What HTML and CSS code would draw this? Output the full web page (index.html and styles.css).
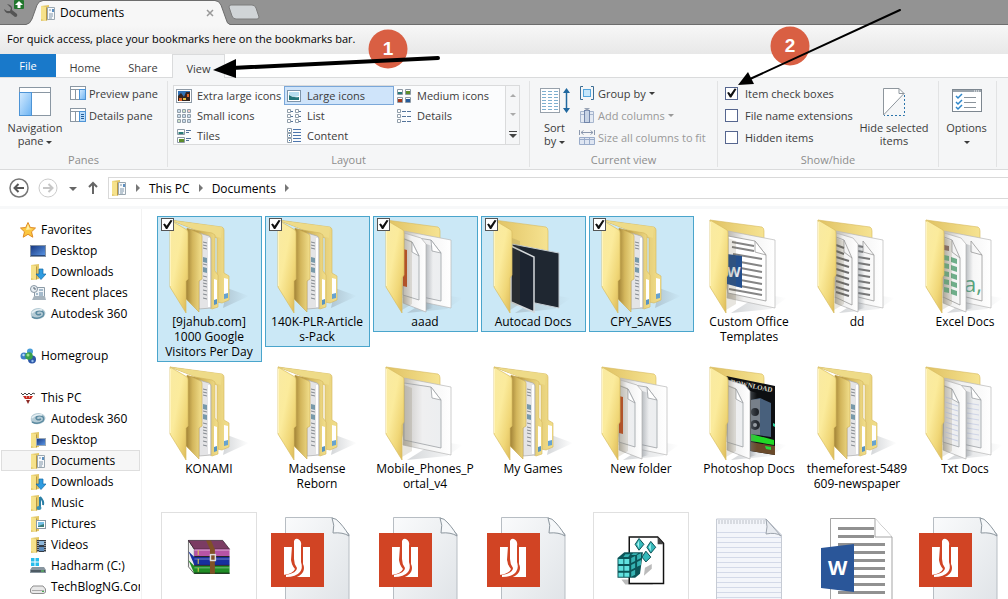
FILE: index.html
```html
<!DOCTYPE html>
<html lang="en">
<head>
  <meta charset="UTF-8" />
  <title>Documents</title>
  <link rel="stylesheet" href="styles.css">
</head>
<body>
  <!-- shared drawings -->
  <svg class="defs" aria-hidden="true">
    <defs>
      <linearGradient id="gFront" x1="0" y1="0" x2="1" y2="1">
        <stop offset="0" stop-color="#f9eaa2" /><stop offset=".4" stop-color="#fbeb9c" /><stop offset=".7" stop-color="#f0d778" /><stop offset="1" stop-color="#d9b453" />
      </linearGradient>
      <linearGradient id="gBack" x1="0" y1="0" x2="1" y2="0">
        <stop offset="0" stop-color="#e0c263" /><stop offset="1" stop-color="#f6e391" />
      </linearGradient>
      <linearGradient id="gSide" x1="0" y1="0" x2="1" y2="0">
        <stop offset="0" stop-color="#98792f" /><stop offset=".45" stop-color="#d3b65c" /><stop offset="1" stop-color="#f2df8c" />
      </linearGradient>
      <linearGradient id="gPage" x1="0" y1="0" x2="1" y2="0">
        <stop offset="0" stop-color="#b9b5ac" /><stop offset=".35" stop-color="#f0f0f0" /><stop offset="1" stop-color="#ffffff" />
      </linearGradient>
      <linearGradient id="gInner" x1="0" y1="0" x2="1" y2="0">
        <stop offset="0" stop-color="#c9c7c4" /><stop offset=".5" stop-color="#efeff0" /><stop offset="1" stop-color="#eceef0" />
      </linearGradient>
      <linearGradient id="gShadow" x1="0" y1="0" x2="1" y2="0">
        <stop offset="0" stop-color="#788088" stop-opacity=".45" /><stop offset="1" stop-color="#788088" stop-opacity="0" />
      </linearGradient>
      <linearGradient id="gDoc" x1="0" y1="0" x2="1" y2="1">
        <stop offset="0" stop-color="#fafbfc" /><stop offset="1" stop-color="#dfe3e7" />
      </linearGradient>
      <linearGradient id="gBlue" x1="0" y1="0" x2="1" y2="1">
        <stop offset="0" stop-color="#16357e" /><stop offset="1" stop-color="#5d9bea" />
      </linearGradient>
      <linearGradient id="gPane" x1="0" y1="0" x2="1" y2="1">
        <stop offset="0" stop-color="#d4ebff" /><stop offset="1" stop-color="#6bb3f3" />
      </linearGradient>
    </defs>

    <symbol id="back" viewBox="0 0 96 96">
      <path d="M60 76L86 80L70 91L30 95Z" fill="url(#gShadow)" opacity=".7" />
      <path d="M9 2L61 9Q63 10 63 13V80L27 76Z" fill="url(#gBack)" stroke="#d6b95c" stroke-width=".6" />
    </symbol>
    <symbol id="front" viewBox="0 0 96 96">
      <path d="M27 20L35 23V86L25 92Z" fill="#6b5b35" opacity=".16" />
      <path d="M9 2L26 12Q27 13 27 15V57L25 60V95L9 69Z" fill="url(#gFront)" stroke="#d9bd62" stroke-width=".7" />
      <path d="M9.500 4V68" stroke="#fff4bd" fill="none" />
    </symbol>
    <symbol id="page-back" viewBox="0 0 96 96">
      <path d="M27 13L74 22V90L26 80Z" fill="url(#gPage)" stroke="#b8b8b8" stroke-width=".7" />
    </symbol>
    <symbol id="page-front" viewBox="0 0 96 96">
      <path d="M49 26L56 28V90L49 92Z" fill="url(#gShadow)" />
      <path d="M27 15L44 20L49 26V94L26 85Z" fill="url(#gPage)" stroke="#b0b0b0" stroke-width=".7" />
    </symbol>
    <symbol id="inner-back" viewBox="0 0 96 96">
      <path d="M27 18L54 22L64 35V83L27 75Z" fill="url(#gInner)" stroke="#9da1a5" stroke-width=".8" />
      <path d="M54 22L55 33L64 35Z" fill="#fff" stroke="#9da1a5" stroke-width=".8" />
    </symbol>
    <symbol id="inner-front" viewBox="0 0 96 96">
      <path d="M27 21L35 24L42 38V82L26 77Z" fill="url(#gInner)" stroke="#9da1a5" stroke-width=".8" />
      <path d="M35 24V34L42 38Z" fill="#fff" stroke="#9da1a5" stroke-width=".8" />
    </symbol>
    <symbol id="folder-files" viewBox="0 0 96 96">
      <path d="M66 70L88 78L62 90Z" fill="url(#gShadow)" opacity=".7" />
      <path d="M9 2L61 9Q63 10 63 12V55L68 58V82L61 85L56 84V20Z" fill="url(#gSide)" stroke="#d3b65b" stroke-width=".6" />
      <path d="M9 2L61 9L60 20L40 14Z" fill="#eedb88" />
      <path d="M63 60L67 61V76L63 77Z" fill="#fff" /><path d="M63 76L67 75V80L63 81Z" fill="#67a3cf" />
      <path d="M28 11L51 15L54 17V53L57 57V89L51 91L46 88Z" fill="url(#gSide)" stroke="#d3b65b" stroke-width=".6" />
      <path d="M53 61L56 62V82L53 84Z" fill="#fff" /><path d="M53 82L56 81V86L53 87Z" fill="#5994c1" />
      <path d="M38 15L48 18Q50 19 50 21V90L38 91Z" fill="#e4e4e6" stroke="#aaa" stroke-width=".7" />
      <path d="M48 20V89" stroke="#fff" stroke-width="2" />
      <path d="M42 24l4 1M42 27l4 1M42 30l4 1M42 46l4 1M42 58l4 1M42 62l4 1M42 65l4 1M42 68l4 1M42 72l4 1M42 76l4 1M42 80l4 1" stroke="#858a90" stroke-width="1" />
      <path d="M42 39l4 1v5l-4 -1zM42 49l4 1v5l-4 -1z" fill="#7899aa" />
      <path d="M26 10L40 16L41 18V61L38 63V94L24 80Z" fill="url(#gSide)" stroke="#c9aa50" stroke-width=".6" />
      <path d="M9 2L26 12Q27 13 27 15V61L25 63V95L9 69Z" fill="url(#gFront)" stroke="#d9bd62" stroke-width=".7" />
      <path d="M9.500 4V68" stroke="#fff4bd" />
    </symbol>

    <symbol id="s-folder" viewBox="0 0 16 16">
      <path d="M1 1L9 0V15L1 16Z" fill="#e2c767" /><path d="M1 1L6 2V16L1 14Z" fill="#f6e28b" /><path d="M6 2L7 3V15L6 16Z" fill="#b99842" />
    </symbol>
    <symbol id="i-documents" viewBox="0 0 16 16">
      <use href="#s-folder" width="16" height="16" /><path d="M7.500 2.500H14.500V14.500H7.500Z" fill="#f7f9fb" stroke="#9aa7b0" />
      <path d="M9 5H11M9 9H13M9 11H13M9 13H12" stroke="#8097aa" /><path d="M12 4H14V7H12Z" fill="#5d8fc0" />
    </symbol>
    <symbol id="i-downloads" viewBox="0 0 16 16">
      <use href="#s-folder" width="16" height="16" /><path d="M9 5H13V10H16L11 15.500L6 10H9Z" fill="#2d9be0" stroke="#1669a5" stroke-width=".7" />
    </symbol>
    <symbol id="i-deskfolder" viewBox="0 0 16 16">
      <use href="#s-folder" width="16" height="16" /><rect x="6.500" y="6.500" width="9" height="7" fill="url(#gBlue)" stroke="#9ba8b4" />
    </symbol>
    <symbol id="i-music" viewBox="0 0 16 16">
      <use href="#s-folder" width="16" height="16" /><path d="M10 2Q14 6 13 10M10 2V13" stroke="#2b7fa6" stroke-width="2" fill="none" /><ellipse cx="9" cy="13" rx="2.500" ry="2" fill="#3790b5" />
    </symbol>
    <symbol id="i-pictures" viewBox="0 0 16 16">
      <use href="#s-folder" width="16" height="16" /><rect x="6.500" y="4.500" width="9" height="8" fill="#fff" stroke="#8a98a3" /><path d="M8 6H14V9L8 10Z" fill="#76bfe6" /><path d="M8 10L14 8V11H8Z" fill="#397d78" />
    </symbol>
    <symbol id="i-videos" viewBox="0 0 16 16">
      <use href="#s-folder" width="16" height="16" /><rect x="7" y="3" width="9" height="12" fill="#333c46" /><rect x="9" y="4" width="5" height="4" fill="#8cb6da" /><rect x="9" y="10" width="5" height="4" fill="#5d8cbc" />
      <path d="M8 4V15M15 4V15" stroke="#fff" stroke-dasharray="1 1" />
    </symbol>
    <symbol id="i-desktop" viewBox="0 0 16 16">
      <rect x=".5" y="2.500" width="15" height="11" fill="url(#gBlue)" stroke="#8593a3" /><path d="M1 12.500H15" stroke="#28497f" />
    </symbol>
    <symbol id="i-recent" viewBox="0 0 16 16">
      <path d="M4.500 2.500H14.500V12.500H4.500Z" fill="#f0f4f7" stroke="#8c9ba7" /><path d="M2 15L4 11H15L16 15Z" fill="#a6b3bd" /><circle cx="4" cy="4" r="3.500" fill="#e9eef2" stroke="#8897a3" /><path d="M4 2V4H6" stroke="#566774" fill="none" />
      <path d="M9 5H13M6 9H8M9 8H13M9 10H13" stroke="#5a81a0" />
    </symbol>
    <symbol id="i-autodesk" viewBox="0 0 16 16">
      <path d="M1 6Q3 2 9 2Q15 3 15.500 7Q15 12 9 13Q5 14 3 12Q0 11 1 6Z" fill="#b5cbd5" />
      <path d="M2 11Q8 14 13 10Q15 6 11 5Q7 4 6 7Q7 10 11 8" fill="none" stroke="#5b8aa0" stroke-width="1.500" /><path d="M2 7Q5 3 12 4" stroke="#e6eff3" fill="none" stroke-width="1.500" />
    </symbol>

    <symbol id="i-doc-orange" viewBox="0 0 96 96">
      <path d="M16.500 5.500H63L80 22V96H16.500Z" fill="url(#gDoc)" stroke="#b7bdc3" />
      <path d="M63 6Q66 13 64 21Q74 20 80 24Q78 19 71 11Q67 6 63 6Z" fill="#f6f8fa" stroke="#8d979f" />
      <rect x="2" y="21" width="53" height="54" fill="#d14424" />
      <path d="M15 35H41V65H15Z" fill="#fff" />
      <path d="M23 34H34V52Q36 56 34 60Q31 65 24 66H14V63Q24 62 26 57Q22 52 22 48Z" fill="#d14424" />
      <path d="M25 47V29Q26 26 29 27Q33 29 32 34V50Q34 56 31 60Q27 65 17 65V63Q28 61 28 56Q25 52 25 47Z" fill="#fff" />
      <path d="M15 35H22V48Q22 53 24 56Q23 60 15 62Z" fill="#fff" />
    </symbol>
  </svg>

  <header class="tab-strip">
    <svg class="wrench" width="28" height="24" viewBox="0 0 28 24"><path d="M7 4L11 8L10 11L7 11L4 9Q5 14 10 13L15 17Q18 17 17 14L12 10Q13 5 7 4Z" fill="#555" /><rect x="14" y="0" width="10" height="9" rx="1" fill="#21762d" /><path d="M19 1L23 5H20.500V8H17.500V5H15Z" fill="#fff" /></svg>
    <div class="tab">
      <svg class="tab-shape" width="204" height="25" viewBox="0 0 204 25"><path d="M0 24.500Q4 24 6 19L11 5Q13 1 17 1H189Q193 1 195 5L200 19Q201 24 204 24.500V25H0Z" fill="#f7f7f7" /><path d="M0 24.500Q4 24 6 19L11 5Q13 .5 17 .5H189Q193 .5 195 5L200 19Q201 24 204 24.500" fill="none" stroke="#6d6d6d" /></svg>
      <svg width="16" height="16"><use href="#i-documents" /></svg>
      <span>Documents</span>
      <button class="tab-close" aria-label="Close tab"><svg width="8" height="8" viewBox="0 0 8 8"><path d="M1 1L7 7M7 1L1 7" stroke="#999" stroke-width="1.500" /></svg></button>
    </div>
    <button class="new-tab" aria-label="New tab"><svg width="32" height="16" viewBox="0 0 32 16"><path d="M3 1H24Q27 1 28 4L31 13Q31 15 29 15H8Q5 15 4 12L1 3Q1 1 3 1Z" fill="#d0d4d7" stroke="#7c7c7c" /></svg></button>
  </header>
  <div class="bookmarks">For quick access, place your bookmarks here on the bookmarks bar.</div>

  <nav class="ribbon-tabs">
    <button class="file">File</button>
    <button>Home</button>
    <button>Share</button>
    <button class="active">View</button>
  </nav>

  <section class="ribbon">
    <div class="group panes">
      <div class="group-body">
        <button class="big">
          <svg width="32" height="30" viewBox="0 0 32 30"><rect x=".5" y=".5" width="31" height="28" fill="#fff" stroke="#8a97a3" /><path d="M1 5.500H31" stroke="#8a97a3" /><rect x=".5" y="5.500" width="12" height="23" fill="url(#gPane)" stroke="#4d94d6" /></svg>
          <span>Navigation<br>pane <i class="caret"></i></span>
        </button>
        <div class="stack">
          <button><svg width="16" height="16" viewBox="0 0 16 16"><rect x=".5" y="1.500" width="15" height="13" fill="#fff" stroke="#8a97a3" /><path d="M1 4.500H15M5.500 5V14" stroke="#8a97a3" /><rect x="9.500" y="4.500" width="6" height="10" fill="url(#gPane)" stroke="#4d94d6" /></svg>Preview pane</button>
          <button><svg width="16" height="16" viewBox="0 0 16 16"><rect x=".5" y="1.500" width="15" height="13" fill="#fff" stroke="#8a97a3" /><path d="M1 4.500H15M5.500 5V14" stroke="#8a97a3" /><rect x="9.500" y="4.500" width="6" height="10" fill="#b9dcfa" stroke="#4d94d6" /><path d="M11 7.500H14M11 9.500H14M11 11.500H14" stroke="#235d9a" /></svg>Details pane</button>
        </div>
      </div>
      <div class="group-title">Panes</div>
    </div>

    <div class="group layout">
      <div class="group-body">
        <div class="gallery">
          <button><svg width="16" height="16" viewBox="0 0 16 16"><rect x=".5" y="1.500" width="15" height="13" fill="#fff" stroke="#8d99a5" /><rect x="2" y="3" width="12" height="10" fill="#3272b5" /><path d="M2 13V8L5 5L8 9L10 4H14V13Z" fill="#35251e" /><path d="M3 10h3v3h-3zM11 6h2v3h-2z" fill="#e1662b" /><path d="M7 10h3v2h-3z" fill="#e9c343" /></svg>Extra large icons</button>
          <button class="selected"><svg width="16" height="16" viewBox="0 0 16 16"><rect x="1.500" y="2.500" width="13" height="11" fill="#fff" stroke="#7d94aa" /><path d="M3 4H13V8L8 9L3 7Z" fill="#b7ddee" /><path d="M3 7Q7 10 13 9V12H3Z" fill="#247579" /></svg>Large icons</button>
          <button><svg width="16" height="16" viewBox="0 0 16 16"><path d="M1.500 1.500h5v5h-5zM9.500 1.500h5v5h-5zM1.500 9.500h5v5h-5zM9.500 9.500h5v5h-5z" fill="#fff" stroke="#8d99a5" /><path d="M2 4h4v2h-4z" fill="#297a77" /><path d="M10 3h4v3h-4z" fill="#5c8e2b" /><path d="M2 11h4v3h-4z" fill="#a3391d" /><path d="M10 11h4v3h-4z" fill="#245b9c" /></svg>Medium icons</button>
          <button><svg width="16" height="16" viewBox="0 0 16 16"><path d="M1.500 1.500h3v3h-3zM6.500 1.500h3v3h-3zM11.500 1.500h3v3h-3zM1.500 6.500h3v3h-3zM6.500 6.500h3v3h-3zM11.500 6.500h3v3h-3zM1.500 11.500h3v3h-3zM6.500 11.500h3v3h-3zM11.500 11.500h3v3h-3z" fill="#fff" stroke="#919eaa" /><path d="M3 2.500v1M3 7.500v1M8 7.500v1M13 7.500v1M8 12.500v1M13 12.500v1" stroke="#2f72a8" /><path d="M8 2.500v1M3 12.500v1" stroke="#42912c" /><path d="M13 2.500v1" stroke="#c23a22" /></svg>Small icons</button>
          <button><svg width="16" height="16" viewBox="0 0 16 16"><path d="M1.500 1.500h3v3h-3zM1.500 6.500h3v3h-3zM1.500 11.500h3v3h-3zM9.500 1.500h3v3h-3zM9.500 6.500h3v3h-3zM9.500 11.500h3v3h-3z" fill="#fff" stroke="#919eaa" /><path d="M5 3.500h2M5 8.500h2M5 13.500h2M13 3.500h2M13 8.500h2M13 13.500h2" stroke="#54749a" /></svg>List</button>
          <button><svg width="16" height="16" viewBox="0 0 16 16"><path d="M1.500 1.500h3v3h-3zM1.500 6.500h3v3h-3zM1.500 11.500h3v3h-3z" fill="#fff" stroke="#919eaa" /><path d="M6 3.500h4M11 3.500h4M6 8.500h4M11 8.500h4M6 13.500h4M11 13.500h4" stroke="#54749a" /></svg>Details</button>
          <button><svg width="16" height="16" viewBox="0 0 16 16"><path d="M1.500 1.500h7v5h-7zM1.500 9.500h7v5h-7z" fill="#fff" stroke="#8d99a5" /><path d="M2.500 4h5v2h-5z" fill="#297a77" /><path d="M3 11h5v3h-5z" fill="#5c8e2b" /><path d="M10 2.500h5M10 4.500h3M10 10.500h5M10 12.500h3" stroke="#54749a" /></svg>Tiles</button>
          <button><svg width="16" height="16" viewBox="0 0 16 16"><path d="M1.500 .5h4v4h-4zM1.500 5.500h4v4h-4zM1.500 10.500h4v4h-4z" fill="#fff" stroke="#919eaa" /><path d="M3 2.500h1M3 7.500h1M3 12.500h1" stroke="#2f72a8" /><path d="M7 1.500h8M7 4.500h8M7 7.500h8M7 10.500h8M7 13.500h8" stroke="#4d76ad" /></svg>Content</button>
        </div>
        <div class="gallery-scroll">
          <button aria-label="Scroll up"><i class="caret up"></i></button>
          <button aria-label="Scroll down"><i class="caret"></i></button>
          <button class="more" aria-label="More layouts"><svg width="8" height="8" viewBox="0 0 8 8"><path d="M0 1.500H8" stroke="#444" /><path d="M0 4H8L4 8Z" fill="#444" /></svg></button>
        </div>
      </div>
      <div class="group-title">Layout</div>
    </div>

    <div class="group current">
      <div class="group-body">
        <button class="big">
          <svg width="32" height="30" viewBox="0 0 32 30"><rect x="1.500" y="1.500" width="19" height="24" fill="#fff" stroke="#97a1ab" /><path d="M3 4.500H20M3 7.500H20M3 10.500H20M3 13.500H20M3 16.500H20M3 19.500H20M3 22.500H20" stroke="#7fb0cf" stroke-dasharray="4 2" /><path d="M27.500 3V24" stroke="#20689f" stroke-width="1.500" /><path d="M24 6L27.500 1L31 6ZM24 21L27.500 26L31 21Z" fill="#20689f" /></svg>
          <span>Sort<br>by <i class="caret"></i></span>
        </button>
        <div class="stack">
          <button><svg width="16" height="16" viewBox="0 0 16 16"><path d="M4 1.500H1.500V14.500H4M12 1.500H14.500V14.500H12" fill="none" stroke="#3c6d94" /><rect x="4.500" y="4.500" width="7" height="7" fill="#c5e6fb" stroke="#54a5dc" /></svg>Group by <i class="caret"></i></button>
          <button disabled><svg width="16" height="16" viewBox="0 0 16 16"><path d="M1.500 4.500H14.500V15.500H1.500ZM1 7.500H15" fill="#e4eaf3" stroke="#a7b6ce" /><rect x="5.500" y="3.500" width="5" height="12" fill="#c7d3e5" stroke="#7387ab" /><path d="M5 1H11L8 4Z" fill="#9aa4b5" /></svg>Add columns <i class="caret"></i></button>
          <button disabled><svg width="16" height="16" viewBox="0 0 16 16"><path d="M.5 1V6M15.500 1V6M2 3.500H14M4.500 1.500L2 3.500L4.500 5.500M11.500 1.500L14 3.500L11.500 5.500" fill="none" stroke="#8b98ae" /><path d="M.5 8.500H15.500V15.500H.5ZM.5 10.500H15.500M5.500 8.500V15.500M10.500 8.500V15.500" fill="#dfe6f2" stroke="#9aacca" /></svg>Size all columns to fit</button>
        </div>
      </div>
      <div class="group-title">Current view</div>
    </div>

    <div class="group showhide">
      <div class="group-body">
        <div class="stack">
          <label><input type="checkbox" checked>Item check boxes</label>
          <label><input type="checkbox">File name extensions</label>
          <label><input type="checkbox">Hidden items</label>
        </div>
        <button class="big">
          <svg width="24" height="30" viewBox="0 0 24 30"><path d="M1 1.500H17L22 6.500L1 28.500Z" fill="#fff" /><path d="M1.500 28V1.500H17L22.500 7M17 1.500V6.500H22L1.500 28" fill="none" stroke="#8e969d" /><path d="M22.500 8V28.500H2" fill="none" stroke="#2a74aa" stroke-dasharray="2 2" /></svg>
          <span>Hide selected<br>items</span>
        </button>
      </div>
      <div class="group-title">Show/hide</div>
    </div>

    <div class="group options">
      <div class="group-body">
        <button class="big">
          <svg width="32" height="30" viewBox="0 0 32 30"><rect x="1.500" y="2.500" width="29" height="22" fill="#fff" stroke="#7d8790" /><path d="M2 4H30" stroke="#9ba4ac" stroke-width="2" /><path d="M23 4H29" stroke="#fff" stroke-dasharray="1 1" /><path d="M5 9L7 11L11 7M5 15L7 17L11 13M5 20L7 22L11 18" fill="none" stroke="#2e86c9" stroke-width="1.500" /><path d="M13 10.500H25M13 15.500H25M13 20.500H25" stroke="#8a939b" /></svg>
          <span>Options<br><i class="caret"></i></span>
        </button>
      </div>
    </div>
  </section>

  <nav class="address-row">
    <button aria-label="Back"><svg width="20" height="20" viewBox="0 0 20 20"><circle cx="10" cy="10" r="9" fill="#fff" stroke="#777" stroke-width="1.500" /><path d="M15 10H6M9.500 6L5.500 10L9.500 14" fill="none" stroke="#555" stroke-width="2" /></svg></button>
    <button aria-label="Forward"><svg width="20" height="20" viewBox="0 0 20 20"><circle cx="10" cy="10" r="9" fill="#fff" stroke="#ccc" stroke-width="1" /><path d="M5 10H14M10.500 6L14.500 10L10.500 14" fill="none" stroke="#c6c6c6" stroke-width="2" /></svg></button>
    <button class="recent" aria-label="Recent locations"><i class="caret"></i></button>
    <button aria-label="Up"><svg width="12" height="14" viewBox="0 0 12 14"><path d="M6 13V2M2 6L6 2L10 6" fill="none" stroke="#666" stroke-width="2" /></svg></button>
    <div class="address">
      <svg width="16" height="16"><use href="#i-documents" /></svg>
      <i class="chev"></i><a href="#">This PC</a><i class="chev"></i><a href="#">Documents</a><i class="chev"></i>
    </div>
  </nav>

  <div class="content">
    <aside class="sidebar">
      <a href="#" class="root"><svg width="16" height="16" viewBox="0 0 16 16"><path d="M8 .5L10.300 5.500L15.500 6L11.500 9.800L12.800 15.200L8 12.300L3.200 15.200L4.500 9.800L.5 6L5.700 5.500Z" fill="#fbc740" stroke="#df8a25" /><path d="M8 2L9.500 6.500L13 7L6 8Z" fill="#fff0a6" /></svg>Favorites</a>
      <a href="#"><svg width="16" height="16"><use href="#i-desktop" /></svg>Desktop</a>
      <a href="#"><svg width="16" height="16"><use href="#i-downloads" /></svg>Downloads</a>
      <a href="#"><svg width="16" height="16"><use href="#i-recent" /></svg>Recent places</a>
      <a href="#"><svg width="16" height="16"><use href="#i-autodesk" /></svg>Autodesk 360</a>
      <a href="#" class="root spaced"><svg width="16" height="16" viewBox="0 0 16 16"><circle cx="4" cy="8" r="3.500" fill="#3d7ec7" /><circle cx="10" cy="3.500" r="3" fill="#4a9ed9" /><circle cx="12" cy="11.500" r="4" fill="#2c57a8" /><circle cx="9" cy="8" r="3.800" fill="#3aa14a" /><circle cx="8" cy="7" r="1.500" fill="#9be08e" /><circle cx="3.500" cy="7" r="1.200" fill="#b8dcf7" /><circle cx="12.500" cy="13" r="1.200" fill="#98c1ee" /></svg>Homegroup</a>
      <a href="#" class="root spaced"><svg width="16" height="16" viewBox="0 0 16 16"><path d="M1 3L3 5L5 3L7 5L9 3L11 5L13 3L15 4" fill="none" stroke="#444" /><path d="M3 6H13L11 9H5Z" fill="#c82c22" /><path d="M6 10H10L8 14Z" fill="#8d2a24" /><path d="M6 7H7M9 7H10" stroke="#fff" /></svg>This PC</a>
      <a href="#"><svg width="16" height="16"><use href="#i-autodesk" /></svg>Autodesk 360</a>
      <a href="#"><svg width="16" height="16"><use href="#i-deskfolder" /></svg>Desktop</a>
      <a href="#" class="current-item"><svg width="16" height="16"><use href="#i-documents" /></svg>Documents</a>
      <a href="#"><svg width="16" height="16"><use href="#i-downloads" /></svg>Downloads</a>
      <a href="#"><svg width="16" height="16"><use href="#i-music" /></svg>Music</a>
      <a href="#"><svg width="16" height="16"><use href="#i-pictures" /></svg>Pictures</a>
      <a href="#"><svg width="16" height="16"><use href="#i-videos" /></svg>Videos</a>
      <a href="#"><svg width="16" height="16" viewBox="0 0 16 16"><path d="M1 0h3.500v3.500h-3.500zM5.500 0h3.500v3.500h-3.500zM1 4.500h3.500v3.500h-3.500zM5.500 4.500h3.500v3.500h-3.500z" fill="#28bdec" /><path d="M2 9H14L16 12V15H0V12Z" fill="#8996a0" /><path d="M1 12H15V14H1Z" fill="#4d5a63" /><path d="M11 13h3" stroke="#62df67" /></svg>Hadharm (C:)</a>
      <a href="#"><svg width="16" height="16" viewBox="0 0 16 16"><path d="M3 7H13L15.500 10V13Q15 14.500 13 14.500H3Q1 14.500 .5 13V10Z" fill="#e8e8e8" stroke="#8e8e8e" /><path d="M2 11.500H14" stroke="#aaa" /><path d="M12 12.500h2" stroke="#4cad50" /></svg>TechBlogNG.Com</a>
    </aside>

    <main class="files">
      <label class="tile picked"><input type="checkbox" checked><svg width="96" height="96"><use href="#folder-files" /></svg><span>[9jahub.com]<br>1000 Google<br>Visitors Per Day</span></label>
      <label class="tile picked"><input type="checkbox" checked><svg width="96" height="96"><use href="#folder-files" /></svg><span>140K-PLR-Article<br>s-Pack</span></label>
      <label class="tile picked"><input type="checkbox" checked><svg width="96" height="96"><use href="#back" /><use href="#page-back" /><use href="#inner-back" /><use href="#page-front" /><use href="#inner-front" /><path d="M26 31L30 32V69L26 68Z" fill="#bf5127" /><use href="#front" /></svg><span>aaad</span></label>
      <label class="tile picked"><input type="checkbox" checked><svg width="96" height="96" viewBox="0 0 96 96"><use href="#back" /><path d="M27 26L74 35V90L26 80Z" fill="#1f2731" stroke="#c4ccd2" /><path d="M26 28L49 39V94L26 84Z" fill="#1c2430" stroke="#d5d9dc" stroke-width="1.500" /><use href="#front" /></svg><span>Autocad Docs</span></label>
      <label class="tile picked"><input type="checkbox" checked><svg width="96" height="96"><use href="#folder-files" /></svg><span>CPY_SAVES</span></label>
      <div class="tile"><svg width="96" height="96" viewBox="0 0 96 96"><use href="#back" /><use href="#page-back" /><path d="M27 18L54 23L65 37V83L27 75Z" fill="#fff" stroke="#999" stroke-width=".8" /><path d="M54 23V34L65 37Z" fill="#fff" stroke="#999" stroke-width=".8" /><path d="M31 24l22 4M31 29l22 4M32 36l29 5M34 43l27 5M34 49l27 5M34 55l27 5M34 61l27 5M34 67l27 5M28 71l33 6" stroke="#858585" stroke-width="2" /><path d="M26 36L41 38V70L26 66Z" fill="#24508f" /><text x="26" y="59" class="w-small">W</text><use href="#front" /></svg><span>Custom Office<br>Templates</span></div>
      <div class="tile"><svg width="96" height="96" viewBox="0 0 96 96"><use href="#back" /><use href="#page-back" /><path d="M54 23L65 37V83L49 79M54 23V34L65 37" fill="none" stroke="#999" stroke-width=".8" /><path d="M49 28l5 1M49 33l5 1M49 39l12 2M49 45l12 2M49 51l12 2M49 57l12 2M49 63l12 2M49 69l12 2M49 75l12 2" stroke="#777" stroke-width="2" /><use href="#page-front" /><path d="M27 19L35 22L43 40V87L26 79M35 22V34L43 40" fill="none" stroke="#999" stroke-width=".8" /><path d="M27 27l8 3M27 33l8 3M27 39l13 4M27 45l13 4M27 51l13 4M27 57l13 4M27 63l13 4M27 69l13 4M27 74l13 4" stroke="#6d6d6d" stroke-width="2" /><use href="#front" /></svg><span>dd</span></div>
      <div class="tile"><svg width="96" height="96" viewBox="0 0 96 96"><use href="#back" /><use href="#page-back" /><path d="M54 23L65 37V83L49 79M54 23V34L65 37" fill="none" stroke="#999" stroke-width=".8" /><text x="47" y="74" class="a-green">a,</text><use href="#page-front" /><path d="M27 19L35 22L43 40V87L26 79M35 22V34L43 40" fill="none" stroke="#999" stroke-width=".8" /><path d="M27 27l5 1v5l-5 -1z" fill="#8a716b" /><path d="M27 37l5 1v5l-5 -1zM34 39l6 2v5l-6 -2zM27 45l5 1v5l-5 -1zM34 47l6 2v5l-6 -2zM27 53l5 1v5l-5 -1zM34 55l6 2v5l-6 -2zM27 61l5 1v5l-5 -1zM34 63l6 2v5l-6 -2zM27 69l5 1v5l-5 -1zM34 71l6 2v5l-6 -2z" fill="#6fae8a" /><use href="#front" /></svg><span>Excel Docs</span></div>

      <div class="tile"><svg width="96" height="96"><use href="#folder-files" /></svg><span>KONAMI</span></div>
      <div class="tile"><svg width="96" height="96"><use href="#folder-files" /></svg><span>Madsense<br>Reborn</span></div>
      <div class="tile"><svg width="96" height="96"><use href="#back" /><use href="#page-back" /><use href="#inner-back" /><use href="#front" /></svg><span>Mobile_Phones_P<br>ortal_v4</span></div>
      <div class="tile"><svg width="96" height="96"><use href="#folder-files" /></svg><span>My Games</span></div>
      <div class="tile"><svg width="96" height="96"><use href="#back" /><use href="#page-back" /><use href="#inner-back" /><use href="#page-front" /><use href="#inner-front" /><path d="M26 31L30 32V69L26 68Z" fill="#bf5127" /><use href="#front" /></svg><span>New folder</span></div>
      <div class="tile"><svg width="96" height="96" viewBox="0 0 96 96"><use href="#back" /><path d="M25 11L74 21V90L49 86Z" fill="#0d0f12" /><text x="29" y="19" class="poster" transform="rotate(11 29 19)">DOWNLOAD</text><path d="M50 35L59 33L70 38V72L50 69Z" fill="#48607c" /><path d="M50 35L59 34V70L50 69Z" fill="#78808a" /><circle cx="54" cy="47" r="4" fill="#20242a" /><circle cx="54" cy="60" r="5" fill="#252a31" /><circle cx="54" cy="60" r="2" fill="#9aa0a6" /><path d="M50 69L73 75V80L50 76Z" fill="#21d827" /><path d="M50 77L74 81V90L50 86Z" fill="#6a4a2a" /><path d="M64 81l6 1v3l-5 -1z" fill="#24dc39" /><path d="M72 58l2 1v3l-2 -1z" fill="#2cd0a0" /><use href="#page-front" /><use href="#inner-front" /><use href="#front" /></svg><span>Photoshop Docs</span></div>
      <div class="tile"><svg width="96" height="96"><use href="#folder-files" /></svg><span>themeforest-5489<br>609-newspaper</span></div>
      <div class="tile"><svg width="96" height="96" viewBox="0 0 96 96"><use href="#back" /><use href="#page-back" /><use href="#inner-back" /><path d="M50 38l12 2M50 43l12 2M50 48l12 2M50 53l12 2M50 58l12 2M50 63l12 2M50 68l12 2M50 73l12 2" stroke="#cfd5e8" /><use href="#page-front" /><use href="#inner-front" /><path d="M28 32l7 2M28 37l13 4M28 42l13 4M28 47l13 4M28 52l13 4M28 57l13 4M28 62l13 4M28 67l13 4M28 72l13 4" stroke="#c8cfe5" /><use href="#front" /></svg><span>Txt Docs</span></div>

      <div class="tile"><svg class="framed" width="96" height="96" viewBox="0 0 96 96">
        <path d="M27 28L33 37V62L27 55Z" fill="#eee" stroke="#333" stroke-width=".7" />
        <path d="M27 28H62L69 37H33Z" fill="#7b3c63" stroke="#2b1425" stroke-width=".7" /><path d="M33 37H69V44H33Z" fill="#b654a5" /><path d="M27 39L33 45H69V53H33Z" fill="#172f9e" /><path d="M27 48L33 54H69V62H33Z" fill="#1f8c25" />
        <path d="M33 38H69M33 47H69M33 56H69" stroke="#fff" opacity=".4" /><path d="M33 44.500H69M33 53.500H69M33 61.500H69" stroke="#111" /><path d="M37 38V43M37 47V52M37 56V60" stroke="#e7ce4c" />
        <path d="M45 28H50L54 37V62H49V37Z" fill="#805126" /><rect x="49.500" y="42.500" width="5" height="6" fill="none" stroke="#ddd" stroke-width="1.500" />
      </svg></div>
      <div class="tile"><svg width="96" height="96"><use href="#i-doc-orange" /></svg></div>
      <div class="tile"><svg width="96" height="96"><use href="#i-doc-orange" /></svg></div>
      <div class="tile"><svg width="96" height="96"><use href="#i-doc-orange" /></svg></div>
      <div class="tile"><svg class="framed" width="96" height="96" viewBox="0 0 96 96">
        <path d="M28 68H60V73H32Z" fill="#bbb" /><path d="M36 24.500H65L71 31V72H36Z" fill="#fff" stroke="#111" stroke-width="1.500" /><path d="M65 24V32H71Z" fill="#444" />
        <path d="M52 56l7 -4v5l-8 7z" fill="#bbb" /><path d="M24 46L31 40H50L47 62L42 66H24Z" fill="#0c5558" />
        <path d="M25 47h5v5h-5zM31 47h5v5h-5zM25 54h5v5h-5zM31 54h5v5h-5zM25 61h5v4h-5zM31 61h5v4h-5z" fill="#61e2df" /><path d="M38 46l4 -2v5l-4 2zM44 43l4 -2v5l-4 2zM38 53l4 -2v5l-4 2zM44 50l4 -2v5l-4 2zM38 60l4 -2v5l-4 2zM32 42h5l-2 3h-5zM40 41h5l-2 2h-5z" fill="#36b3b3" />
        <path d="M46 26L51 32L46 38L42 32ZM58 29L63 35L58 41L54 35ZM53 39L58 45L53 50L49 45Z" fill="#36b9bb" stroke="#0b4d50" /><path d="M46 28V36L44 32ZM58 31V39L56 35Z" fill="#a8f2ef" />
      </svg></div>
      <div class="tile"><svg width="96" height="96" viewBox="0 0 96 96"><path d="M15.500 7H65L80.500 23V96H15.500Z" fill="#f3f5fa" stroke="#c6cbd4" /><path d="M16 20.500H72M16 25.500H80M16 30.500H80M16 35.500H80M16 40.500H80M16 45.500H80M16 50.500H80M16 55.500H80M16 60.500H80M16 65.500H80M16 70.500H80M16 75.500H80M16 80.500H80M16 85.500H80" stroke="#d3d9e8" /><path d="M18 8V12M21 8V12M24 8V12M27 8V12M30 8V12M33 8V12M36 8V12M39 8V12M42 8V12M45 8V12M48 8V12M51 8V12M54 8V12M57 8V12M60 8V12M63 8V12" stroke="#bdc1c8" /><path d="M65 7Q67 15 65 22Q75 20 80 24Z" fill="#e8ebf0" stroke="#9ca3ac" /></svg></div>
      <div class="tile"><svg width="96" height="96" viewBox="0 0 96 96"><path d="M21.500 6.500H66L83 25V96H21.500Z" fill="#fff" stroke="#a5a5a5" /><path d="M29 16.500H65M29 24.500H65M29 32.500H76M29 40.500H76M29 48.500H76M29 56.500H76M29 64.500H76M29 72.500H76M29 80.500H76" stroke="#919191" stroke-width="3" /><path d="M66 6.500V25H83" fill="#fff" stroke="#a5a5a5" /><path d="M12 36L45 32V80L12 76Z" fill="#2a5699" /><text x="19" y="63" class="w-big">W</text></svg></div>
      <div class="tile"><svg width="96" height="96"><use href="#i-doc-orange" /></svg></div>
    </main>
  </div>

  <!-- step markers over the window -->
  <svg class="callouts" width="1008" height="100" viewBox="0 0 1008 100">
    <circle cx="388" cy="49" r="19.500" fill="#d95f43" /><text x="388" y="55">1</text>
    <circle cx="790" cy="46" r="19.500" fill="#d95f43" /><text x="790" y="52">2</text>
    <path d="M438 58L232 68" stroke="#000" stroke-width="4" stroke-linecap="round" /><path d="M213 70L236 59V78Z" />
    <path d="M900 10L750 79" stroke="#000" stroke-width="2" stroke-linecap="round" /><path d="M738 85L748 72L754 84Z" />
  </svg>
</body>
</html>
```
FILE: styles.css
```css
:root {
  --ribbon: #f5f6f7;
  --line: #dadbdc;
  --text: #3b3b3b;
  --muted: #8d8d8d;
  --blue: #1979ca;
}

* {
  box-sizing: border-box;
}

body {
  margin: 0;
  height: 100vh;
  overflow: hidden;
  display: flex;
  flex-direction: column;
  position: relative;
  background: #fff;
  color: #000;
  font-family: "Open Sans", "Noto Sans", sans-serif;
  font-size: 12px;
  line-height: 15px;
}

button {
  font: inherit;
  color: inherit;
  background: none;
  border: none;
  padding: 0;
}

a {
  color: inherit;
  text-decoration: none;
}

svg {
  flex: none;
  display: block;
}

.defs {
  position: absolute;
  width: 0;
  height: 0;
}

/* browser tab strip */
.tab-strip {
  flex: none;
  display: flex;
  height: 25px;
  background: #939393;
  border-bottom: 1px solid #6d6d6d;
}

.wrench {
  margin-right: -2px;
}

.tab {
  position: relative;
  display: flex;
  align-items: center;
  width: 204px;
  height: 25px;
  padding: 0 16px 0 14px;
  gap: 4px;
}

.tab-shape {
  position: absolute;
  left: 0;
  top: 0;
}

.tab > :not(.tab-shape) {
  position: relative;
}

.tab-close {
  margin-left: auto;
}

.new-tab {
  align-self: center;
  margin-left: -2px;
}

.bookmarks {
  flex: none;
  height: 29px;
  padding: 6px 7px;
  font-size: 11px;
  background: linear-gradient(#f7f7f7, #e8e8e8);
}

/* ribbon */
.ribbon-tabs {
  flex: none;
  display: flex;
  height: 24px;
  font-size: 11px;
  color: var(--text);
  border-bottom: 1px solid var(--line);
}

.ribbon-tabs button {
  width: 58px;
  height: 23px;
  padding-top: 3px;
}

.ribbon-tabs .file {
  width: 56px;
  background: var(--blue);
  color: #fff;
  padding: 0;
}

.ribbon-tabs .active {
  width: 53px;
  height: 24px;
  background: var(--ribbon);
  border: 1px solid var(--line);
  border-bottom: none;
}

.ribbon {
  flex: none;
  display: flex;
  height: 92px;
  padding: 3px 0 2px;
  font-size: 11px;
  background: var(--ribbon);
  color: var(--text);
  border-bottom: 1px solid var(--line);
}

.group {
  display: flex;
  flex-direction: column;
  border-right: 1px solid #e2e3e4;
}

.group-body {
  display: flex;
  flex: 1;
  padding-top: 1px;
}

.group-title {
  text-align: center;
  color: var(--muted);
  height: 15px;
}

.panes { width: 168px; }
.layout { width: 362px; }
.current { width: 188px; }
.showhide { width: 221px; }
.options { width: 58px; }

.big {
  display: flex;
  flex-direction: column;
  align-items: center;
  gap: 4px;
  align-self: flex-start;
  line-height: 13px;
  padding-top: 5px;
}

.panes .big { width: 70px; }
.current .big { width: 49px; }
.showhide .big { width: 86px; }
.options .big { width: 55px; }

.stack button,
.stack label {
  display: flex;
  align-items: center;
  height: 22px;
  gap: 3px;
  white-space: nowrap;
}

.showhide .stack {
  width: 133px;
  padding-left: 7px;
}

.showhide .stack label {
  gap: 7px;
}

button:disabled {
  color: #999;
}

.caret {
  display: inline-block;
  vertical-align: middle;
  border: 3px solid transparent;
  border-top-color: currentColor;
  border-bottom: none;
}

.caret.up {
  border-top: none;
  border-bottom: 3px solid currentColor;
}

.layout .group-body {
  padding: 4px 9px 0 5px;
  align-items: flex-start;
}

.gallery {
  display: grid;
  flex: 1;
  grid-template-columns: 110px 110px 1fr;
  grid-auto-rows: 20px;
  background: #fbfcfd;
  border: 1px solid var(--line);
  height: 60px;
}

.gallery button {
  display: flex;
  align-items: center;
  height: 19px;
  padding-left: 2px;
  gap: 5px;
  white-space: nowrap;
}

.gallery .selected {
  padding-left: 1px;
  background: #cfe4fa;
  border: 1px solid #7aa7d9;
}

.gallery-scroll {
  display: flex;
  flex-direction: column;
  width: 14px;
  height: 60px;
  border: 1px solid var(--line);
  border-left: none;
  color: #aaa;
}

.gallery-scroll button {
  display: flex;
  flex: 1;
  align-items: center;
  justify-content: center;
}

input[type="checkbox"] {
  flex: none;
  appearance: none;
  width: 13px;
  height: 13px;
  margin: 0;
  background: #fff;
  border: 1px solid #56668f;
}

input[type="checkbox"]:checked::before {
  content: "";
  display: block;
  width: 11px;
  height: 11px;
  background: #111;
  clip-path: polygon(10% 48%, 26% 40%, 42% 62%, 78% 8%, 96% 14%, 48% 92%, 36% 92%);
}

/* address bar */
.address-row {
  flex: none;
  display: flex;
  align-items: center;
  height: 39px;
  padding: 0 0 0 9px;
  gap: 9px;
  border-bottom: 3px solid #f7f8f9;
}

.address-row button {
  color: #666;
}

.address-row .recent {
  width: 11px;
}

.recent .caret {
  border-width: 4px 4px 0;
}

.address {
  display: flex;
  flex: 1;
  align-items: center;
  height: 22px;
  padding-left: 2px;
  border: 1px solid #d9d9d9;
  border-right: none;
}

.chev {
  margin: 0 9px;
  border: 4px solid transparent;
  border-left-color: #777;
  border-right: none;
}

/* folder tree */
.content {
  flex: 1;
  display: flex;
  min-height: 0;
}

.sidebar {
  flex: none;
  width: 142px;
  padding: 10px 1px 0;
  border-right: 1px solid #f2f2f2;
  overflow: hidden;
}

.sidebar a {
  display: flex;
  align-items: center;
  height: 21px;
  padding-left: 29px;
  gap: 5px;
  white-space: nowrap;
  overflow: hidden;
}

.sidebar .root {
  padding-left: 19px;
}

.sidebar .spaced {
  margin-top: 21px;
}

.sidebar .current-item {
  padding-left: 28px;
  background: #f6f6f6;
  border: 1px solid #dedede;
}

/* file tiles */
.files {
  flex: 1;
  display: grid;
  grid-template-columns: repeat(8, 105px);
  grid-auto-rows: 146px;
  gap: 1px 3px;
  align-items: start;
  align-content: start;
  padding: 7px 0 0 15px;
  min-width: 0;
  overflow: hidden;
}

.tile {
  position: relative;
  display: flex;
  flex-direction: column;
  align-items: center;
  padding: 1px 1px 2px 0;
  border: 1px solid transparent;
  text-align: center;
  white-space: nowrap;
}

.tile.picked {
  background: #cbe8f6;
  border-color: #4aa5cc;
}

.tile input[type="checkbox"] {
  position: absolute;
  left: 3px;
  top: 1px;
  border-color: #555;
}

.framed {
  border: 1px solid #e0e0e0;
}

.w-small {
  font: bold 14px "Open Sans", sans-serif;
  fill: #e3e8f0;
}

.w-big {
  font: bold 20px "Open Sans", sans-serif;
  fill: #fff;
}

.a-green {
  font: 22px "Open Sans", sans-serif;
  fill: #57a47c;
}

.poster {
  font: bold 7px "Liberation Serif", serif;
  fill: #d9d6c4;
}

/* step markers */
.callouts {
  position: absolute;
  left: 0;
  top: 0;
  pointer-events: none;
}

.callouts text {
  font: bold 19px "Liberation Sans", sans-serif;
  fill: #fff;
  text-anchor: middle;
}
```
